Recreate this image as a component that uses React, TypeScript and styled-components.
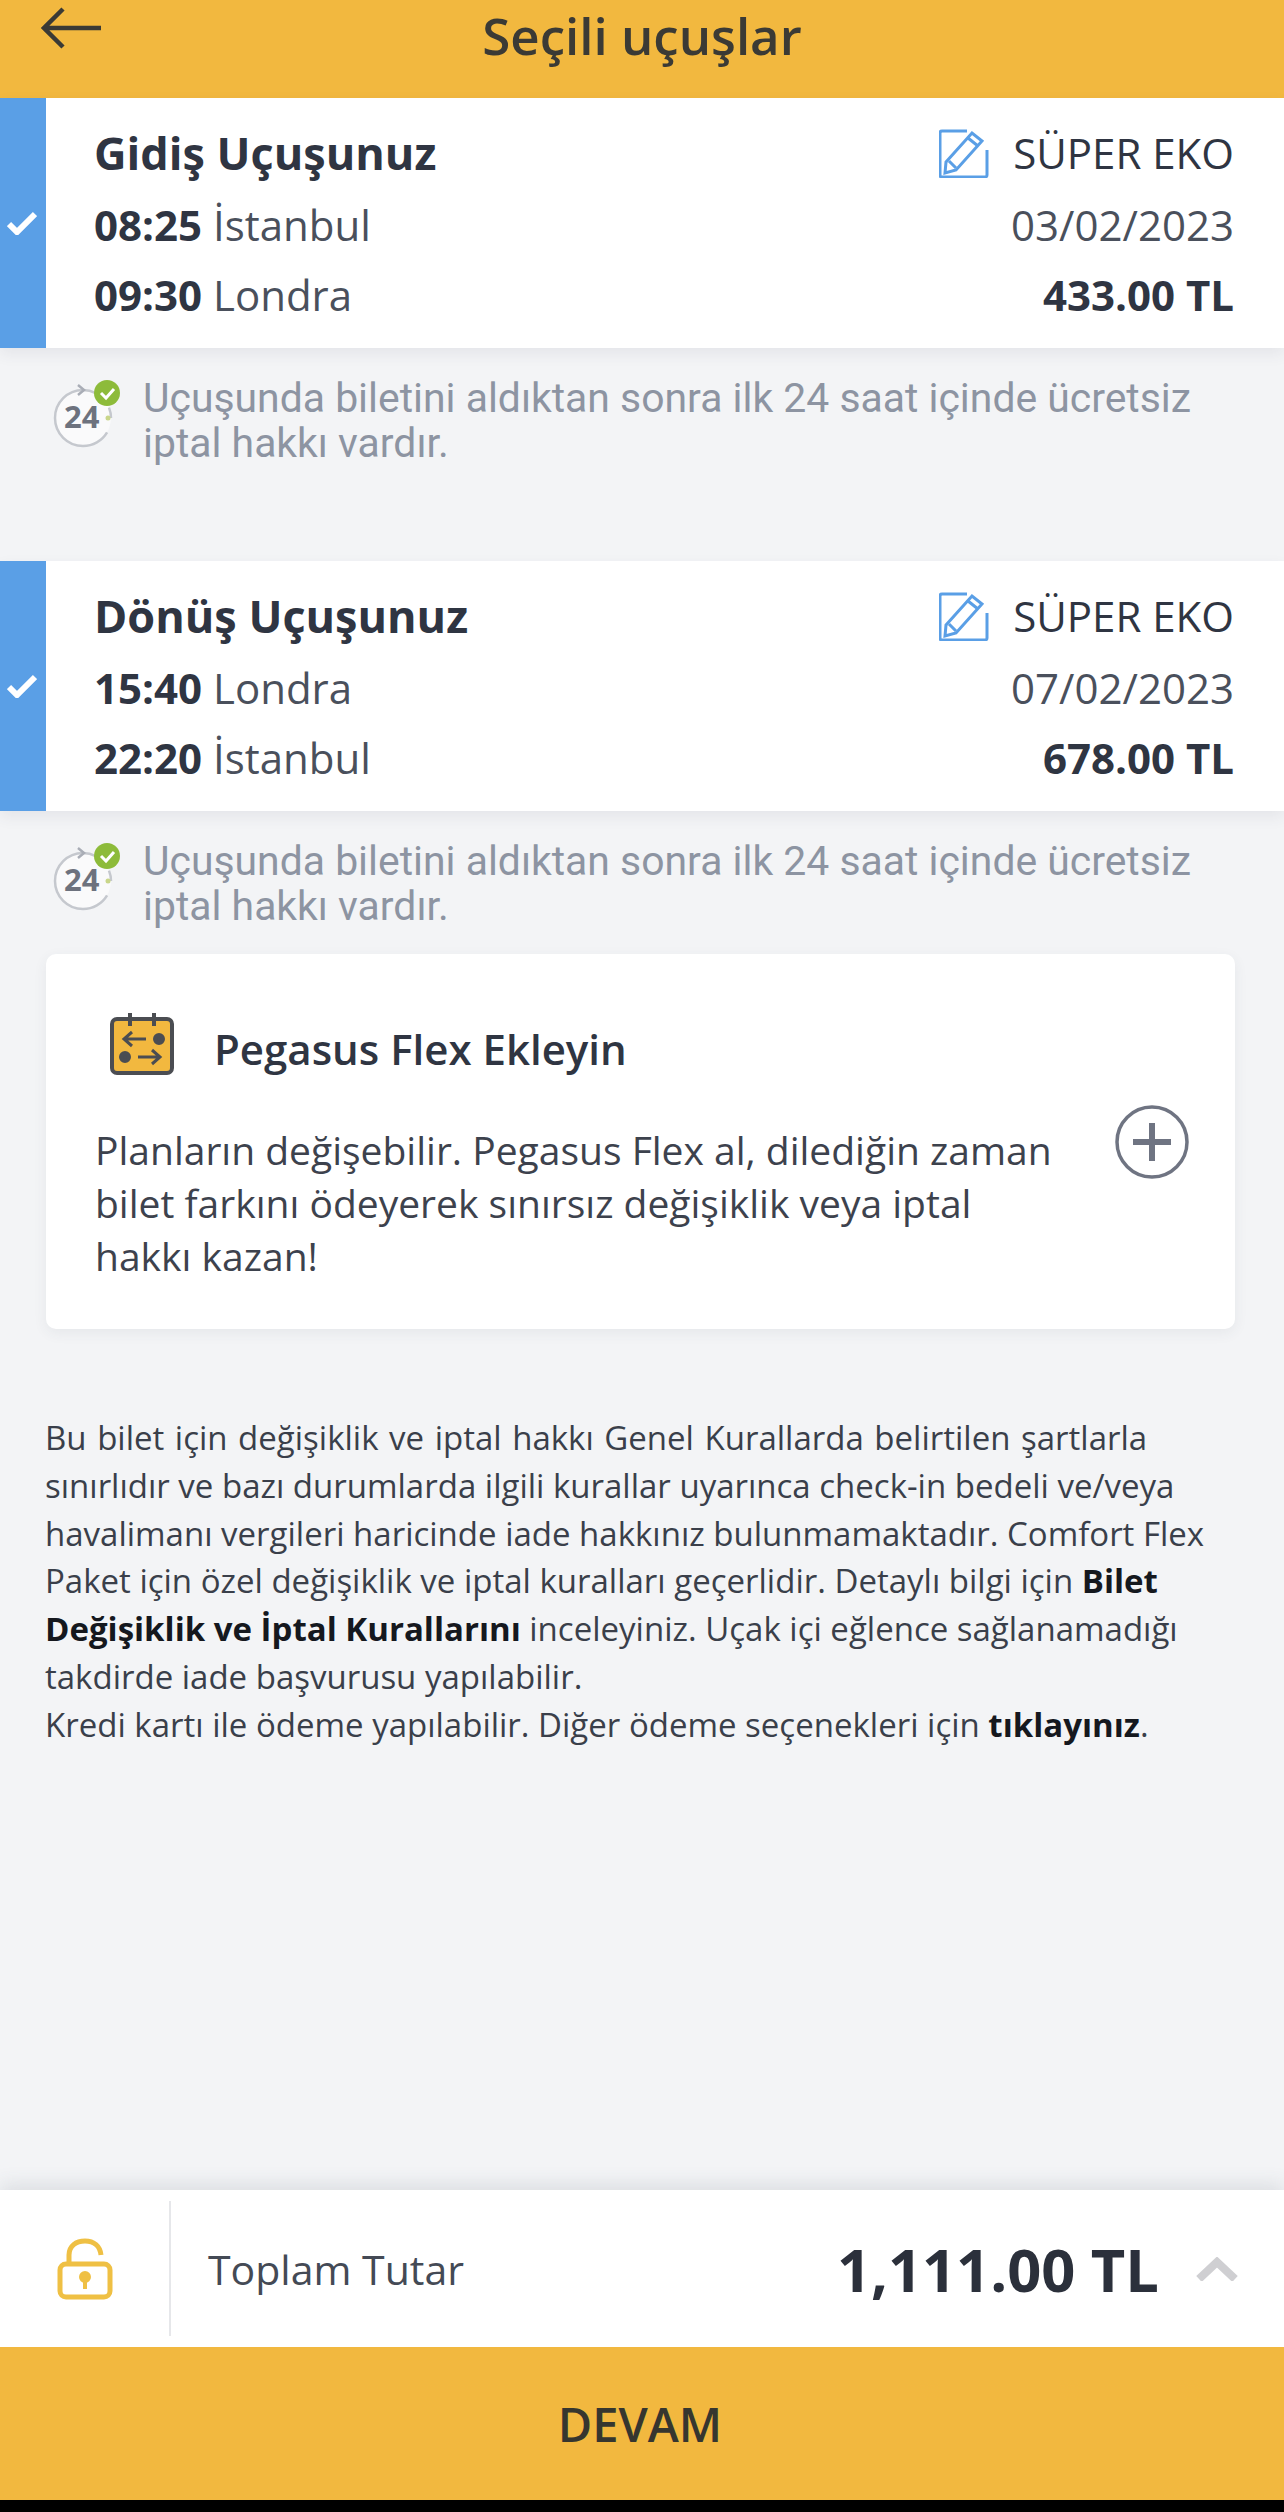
import React from 'react'
import styled, { createGlobalStyle } from 'styled-components'

const GlobalStyle = createGlobalStyle`
  html, body {
    margin: 0;
    padding: 0;
    background: #000;
  }
`

const Page = styled.div`
  display: flex;
  flex-direction: column;
  width: 1284px;
  height: 2512px;
  overflow: hidden;
  background: #f3f4f6;
  font-family: "Open Sans", "Noto Sans", sans-serif;
  color: #2f3542;
`

const Header = styled.header`
  display: grid;
  grid-template-columns: 1fr auto 1fr;
  flex: 0 0 98px;
  background: #f2b83f;
`

const BackIcon = styled.svg`
  width: 60px;
  height: 42px;
  margin: 7px 0 0 41px;
`

const Title = styled.h1`
  margin: 0;
  font-size: 51px;
  font-weight: 600;
  line-height: 70px;
  color: #3b3a35;
`

const FlightCard = styled.section`
  display: flex;
  flex: 0 0 250px;
  background: #fff;
  box-shadow: 0 6px 14px rgba(60, 70, 90, 0.08);
`

const Strip = styled.div`
  display: flex;
  align-items: center;
  justify-content: center;
  width: 46px;
  padding-right: 2px;
  box-sizing: border-box;
  background: #5a9fe6;
`

const FlightBody = styled.div`
  display: flex;
  flex: 1;
  justify-content: space-between;
  padding: 18px 50px 18px 48px;
  font-size: 42px;
  line-height: 70px;
`

const Column = styled.div<{ $end?: boolean }>`
  display: grid;
  grid-template-rows: 74px 70px 70px;
  align-items: center;
  justify-items: ${p => (p.$end ? 'end' : 'start')};
`

const CardTitle = styled.div`
  font-size: 45px;
  font-weight: 700;
`

const Strong = styled.b`
  font-weight: 700;
`

const City = styled.span`
  color: #4a505c;
`

const Fare = styled.div`
  display: flex;
  align-items: center;
  gap: 24px;
`

const Notice = styled.div<{ $gap: number }>`
  display: flex;
  gap: 23px;
  padding: 28px 49px 0 48px;
  margin-bottom: ${p => p.$gap}px;
  font-family: Roboto, "Liberation Sans", sans-serif;
  font-size: 40.9px;
  line-height: 45px;
  color: #8d94a2;
`

const NoticeIcon = styled.svg`
  flex: 0 0 72px;
  width: 72px;
  height: 72px;
`

const FlexCard = styled.section`
  display: flex;
  align-items: center;
  justify-content: space-between;
  height: 375px;
  margin: 0 49px 0 46px;
  padding: 0 46px 0 49px;
  box-sizing: border-box;
  border-radius: 10px;
  background: #fff;
  box-shadow: 0 4px 14px rgba(60, 70, 90, 0.07);
`

const FlexMain = styled.div`
  padding-top: 16px;
`

const FlexHead = styled.div`
  display: flex;
  align-items: center;
  gap: 40px;
  height: 62px;
  margin: 0 0 43px 15px;
  font-size: 42px;
  font-weight: 600;
`

const CalendarSvg = styled.svg`
  flex: 0 0 64px;
  align-self: flex-start;
  margin-top: -5px;
`

const FlexText = styled.p`
  margin: 0;
  font-size: 39px;
  line-height: 53px;
  color: #3d424d;
`

const Legal = styled.p`
  margin: 85px 30px 0 45px;
  font-size: 33px;
  line-height: 47.8px;
  color: #3a3f4a;
`

const LegalWide = styled.span`
  word-spacing: 2px;
`

const LegalBold = styled.b`
  font-weight: 700;
  color: #15181e;
`

const Spacer = styled.div`
  flex: 1;
`

const Footer = styled.div`
  display: flex;
  align-items: center;
  flex: 0 0 157px;
  background: #fff;
  box-shadow: 0 -6px 18px rgba(60, 70, 90, 0.12);
`

const LockBox = styled.div`
  display: flex;
  align-items: center;
  justify-content: center;
  width: 171px;
  height: 135px;
  box-sizing: border-box;
  border-right: 2px solid #e6e7ea;
`

const TotalLabel = styled.span`
  flex: 1;
  margin-left: 37px;
  font-size: 41px;
  color: #444a55;
`

const TotalValue = styled.span`
  font-size: 59.6px;
  font-weight: 700;
  color: #2b303b;
`

const Chevron = styled.svg`
  width: 42px;
  height: 24px;
  margin: 0 46px 0 37px;
`

const Continue = styled.div`
  display: flex;
  align-items: center;
  justify-content: center;
  flex: 0 0 153px;
  padding-right: 4px;
  box-sizing: border-box;
  background: #f2b83f;
  font-size: 47px;
  font-weight: 600;
  color: #36362f;
`

const BlackBar = styled.div`
  flex: 0 0 12px;
  background: #000;
`

const Check = () => (
  <svg width="30" height="24" viewBox="0 0 30 24" fill="none">
    <path d="M2 13l8 8L28 3" stroke="#fff" strokeWidth="6" />
  </svg>
)

const EditIcon = () => (
  <svg width="50" height="50" viewBox="0 0 50 50" fill="none" stroke="#5a9fe6" strokeWidth="3">
    <path d="M28 3H3a2 2 0 0 0-2 2v42a2 2 0 0 0 2 2h43a2 2 0 0 0 2-2V22" />
    <path d="M7 34L33 5l10 8-26 29-11 3z" />
    <path d="M29 10l10 8M10 33l7 7" />
  </svg>
)

const TwentyFour = () => (
  <NoticeIcon viewBox="0 0 72 72" fill="none">
    <circle cx="35" cy="42" r="28" fill="#fafafb" stroke="#c5c8ce" strokeWidth="2.5" strokeDasharray="130 20" strokeDashoffset="-15" />
    <path d="M30 9l6 5-6 5" stroke="#a9adb6" strokeWidth="2.5" />
    <text x="16" y="52" fontFamily="Open Sans, sans-serif" fontSize="31" fontWeight="700" fill="#6d727e">24</text>
    <circle cx="59" cy="17" r="13" fill="#8dbb3a" />
    <path d="M53 17l5 5 8-9" stroke="#fff" strokeWidth="3" />
    <circle cx="60" cy="42" r="2.5" fill="#c9d68a" />
  </NoticeIcon>
)

const CalendarIcon = () => (
  <CalendarSvg width="64" height="62" viewBox="0 0 64 62" fill="none" stroke="#4b4d52" strokeWidth="4">
    <rect x="2" y="6" width="60" height="54" rx="5" fill="#f2b83f" />
    <path d="M20 0v13M44 0v13" />
    <path d="M36 26H14M22 19l-8 7 8 7" strokeWidth="3" />
    <circle cx="49" cy="26" r="4" fill="#4b4d52" />
    <circle cx="15" cy="44" r="4" fill="#4b4d52" />
    <path d="M28 44h22M42 37l8 7-8 7" strokeWidth="3" />
  </CalendarSvg>
)

const PlusIcon = () => (
  <svg width="74" height="74" viewBox="0 0 74 74" fill="none" stroke="#6f7482">
    <circle cx="37" cy="37" r="35" strokeWidth="3.5" />
    <path d="M37 18v38M18 37h38" strokeWidth="6" />
  </svg>
)

const LockIcon = () => (
  <svg width="56" height="62" viewBox="0 0 56 62" fill="none" stroke="#efc044" strokeWidth="5">
    <rect x="3" y="26" width="50" height="33" rx="6" />
    <path d="M12 26V17C12 8 19 3 28 3s15 5 16 14" />
    <circle cx="28" cy="39" r="3.5" fill="#efc044" />
    <path d="M28 42v9" strokeWidth="4" />
  </svg>
)

interface FlightProps {
  title: string
  depTime: string
  depCity: string
  arrTime: string
  arrCity: string
  date: string
  price: string
}

function Flight({ title, depTime, depCity, arrTime, arrCity, date, price }: FlightProps) {
  return (
    <FlightCard>
      <Strip>
        <Check />
      </Strip>
      <FlightBody>
        <Column>
          <CardTitle>{title}</CardTitle>
          <div><Strong>{depTime}</Strong> <City>{depCity}</City></div>
          <div><Strong>{arrTime}</Strong> <City>{arrCity}</City></div>
        </Column>
        <Column $end>
          <Fare>
            <EditIcon />
            <span>SÜPER EKO</span>
          </Fare>
          <City>{date}</City>
          <Strong>{price}</Strong>
        </Column>
      </FlightBody>
    </FlightCard>
  )
}

function CancelNotice({ gap }: { gap: number }) {
  return (
    <Notice $gap={gap}>
      <TwentyFour />
      <span>
        Uçuşunda biletini aldıktan sonra ilk 24 saat içinde ücretsiz
        <br />
        iptal hakkı vardır.
      </span>
    </Notice>
  )
}

export default function App() {
  return (
    <Page>
      <GlobalStyle />
      <Header>
        <BackIcon viewBox="0 0 60 42" fill="none" stroke="#3b3a35" strokeWidth="4.5">
          <path d="M60 21H3M22 2L3 21l19 19" />
        </BackIcon>
        <Title>Seçili uçuşlar</Title>
      </Header>
      <Flight
        title="Gidiş Uçuşunuz"
        depTime="08:25"
        depCity="İstanbul"
        arrTime="09:30"
        arrCity="Londra"
        date="03/02/2023"
        price="433.00 TL"
      />
      <CancelNotice gap={95} />
      <Flight
        title="Dönüş Uçuşunuz"
        depTime="15:40"
        depCity="Londra"
        arrTime="22:20"
        arrCity="İstanbul"
        date="07/02/2023"
        price="678.00 TL"
      />
      <CancelNotice gap={25} />
      <FlexCard>
        <FlexMain>
          <FlexHead>
            <CalendarIcon />
            <span>Pegasus Flex Ekleyin</span>
          </FlexHead>
          <FlexText>
            Planların değişebilir. Pegasus Flex al, dilediğin zaman
            <br />
            bilet farkını ödeyerek sınırsız değişiklik veya iptal
            <br />
            hakkı kazan!
          </FlexText>
        </FlexMain>
        <PlusIcon />
      </FlexCard>
      <Legal>
        <LegalWide>Bu bilet için değişiklik ve iptal hakkı Genel Kurallarda belirtilen şartlarla</LegalWide>
        <br />
        sınırlıdır ve bazı durumlarda ilgili kurallar uyarınca check-in bedeli ve/veya
        <br />
        havalimanı vergileri haricinde iade hakkınız bulunmamaktadır. Comfort Flex
        <br />
        Paket için özel değişiklik ve iptal kuralları geçerlidir. Detaylı bilgi için <LegalBold>Bilet</LegalBold>
        <br />
        <LegalBold>Değişiklik ve İptal Kurallarını</LegalBold> inceleyiniz. Uçak içi eğlence sağlanamadığı
        <br />
        takdirde iade başvurusu yapılabilir.
        <br />
        Kredi kartı ile ödeme yapılabilir. Diğer ödeme seçenekleri için <LegalBold>tıklayınız</LegalBold>.
      </Legal>
      <Spacer />
      <Footer>
        <LockBox>
          <LockIcon />
        </LockBox>
        <TotalLabel>Toplam Tutar</TotalLabel>
        <TotalValue>1,111.00 TL</TotalValue>
        <Chevron viewBox="0 0 42 24" fill="none" stroke="#cfcfd2" strokeWidth="8">
          <path d="M3 22L21 5l18 17" />
        </Chevron>
      </Footer>
      <Continue>DEVAM</Continue>
      <BlackBar />
    </Page>
  )
}
